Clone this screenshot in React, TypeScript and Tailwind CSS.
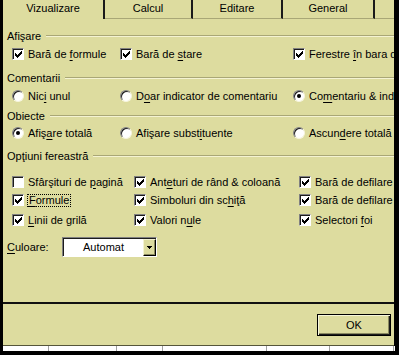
import React from "react";

// one letter of a label may carry the access-key underline
function Acc({ text, at, focus = false }: { text: string; at?: number; focus?: boolean }) {
  const body =
    at === undefined ? (
      text
    ) : (
      <>
        {text.slice(0, at)}
        <span className="underline underline-offset-[2px]">{text.charAt(at)}</span>
        {text.slice(at + 1)}
      </>
    );
  return (
    <span className={focus ? "outline outline-1 outline-dotted outline-black px-[1px]" : ""}>
      {body}
    </span>
  );
}

function CheckBox({ checked }: { checked: boolean }) {
  return (
    <span className="flex h-[12px] w-[12px] shrink-0 items-center justify-center border border-t-[#808080] border-l-[#808080] border-b-white border-r-white bg-white shadow-[inset_1px_1px_0_#1c1c1c]">
      {checked && (
        <svg width="7" height="7" viewBox="0 0 7 7" shapeRendering="crispEdges" className="ml-[1px] mt-[1px]">
          <rect x="0" y="2" width="1" height="3" fill="#000" />
          <rect x="1" y="3" width="1" height="3" fill="#000" />
          <rect x="2" y="4" width="1" height="3" fill="#000" />
          <rect x="3" y="3" width="1" height="3" fill="#000" />
          <rect x="4" y="2" width="1" height="3" fill="#000" />
          <rect x="5" y="1" width="1" height="3" fill="#000" />
          <rect x="6" y="0" width="1" height="3" fill="#000" />
        </svg>
      )}
    </span>
  );
}

function Radio({ on }: { on: boolean }) {
  return (
    <span className="flex h-[12px] w-[12px] shrink-0 items-center justify-center rounded-full border border-t-[#808080] border-l-[#808080] border-b-[#f6f5dc] border-r-[#f6f5dc] bg-white shadow-[inset_1px_1px_0_#1c1c1c]">
      {on && <span className="h-[4px] w-[4px] rounded-full bg-black" />}
    </span>
  );
}

function Group({ title, className }: { title: string; className: string }) {
  return (
    <div className={`flex h-4 shrink-0 items-center pl-[4px] ${className}`}>
      <span className="whitespace-nowrap">{title}</span>
      <div className="ml-[5px] h-[2px] flex-1 border-t border-b border-t-[#a9a776] border-b-[#f4f3d2]" />
    </div>
  );
}

interface Opt {
  text: string;
  at?: number;
  on: boolean;
  focus?: boolean;
}

function Row({
  items,
  kind,
  cols,
  className,
}: {
  items: Opt[];
  kind: "check" | "radio";
  cols: string;
  className: string;
}) {
  return (
    <div className={`grid h-4 shrink-0 items-center pl-[9px] ${cols} ${className}`}>
      {items.map((it) => (
        <div key={it.text} className="flex items-center gap-[4px] whitespace-nowrap">
          {kind === "check" ? <CheckBox checked={it.on} /> : <Radio on={it.on} />}
          <Acc text={it.text} at={it.at} focus={it.focus} />
        </div>
      ))}
    </div>
  );
}

const tabs = [
  { label: "Vizualizare", w: "w-[102px]", selected: true },
  { label: "Calcul", w: "w-[88px]", selected: false },
  { label: "Editare", w: "w-[90px]", selected: false },
  { label: "General", w: "w-[92px]", selected: false },
];

export default function App() {
  const top = "grid-cols-[108px_173px_1fr]";
  const win = "grid-cols-[122px_165px_1fr]";

  return (
    <div className="flex h-[355px] w-[399px] flex-col overflow-hidden bg-black font-['Liberation_Sans',Arial,sans-serif] text-[11px] leading-none text-black">
      <div className="flex h-[346px] shrink-0">
        <div className="w-[3px] shrink-0" />
        <div className="flex w-[391px] shrink-0 flex-col overflow-hidden bg-[#dddc9f]">
          {/* Tab strip */}
          <div className="flex h-[19px] shrink-0">
            {tabs.map((t) => (
              <div
                key={t.label}
                className={`flex ${t.w} shrink-0 items-center justify-center border-r-2 border-r-[#1a1a1a] pb-[2px] ${
                  t.selected ? "" : "border-b border-b-[#a9a776]"
                }`}
              >
                {t.label}
              </div>
            ))}
            <div className="flex-1 border-b border-b-[#a9a776]" />
          </div>

          {/* Tab page */}
          <div className="flex h-[283px] shrink-0 flex-col">
            <Group title="Afişare" className="mt-[9px]" />
            <Row
              kind="check"
              cols={top}
              className="mt-[2px]"
              items={[
                { text: "Bară de formule", at: 8, on: true },
                { text: "Bară de stare", at: 8, on: true },
                { text: "Ferestre în bara de activităţi", at: 9, on: true },
              ]}
            />

            <Group title="Comentarii" className="mt-[8px]" />
            <Row
              kind="radio"
              cols={top}
              className="mt-[2px]"
              items={[
                { text: "Nici unul", at: 3, on: false },
                { text: "Doar indicator de comentariu", at: 1, on: false },
                { text: "Comentariu & indicator", at: 2, on: true },
              ]}
            />

            <Group title="Obiecte" className="mt-[4px]" />
            <Row
              kind="radio"
              cols={top}
              className="mt-[1px]"
              items={[
                { text: "Afişare totală", at: 4, on: true },
                { text: "Afişare substituente", at: 13, on: false },
                { text: "Ascundere totală", at: 5, on: false },
              ]}
            />

            <Group title="Opţiuni fereastră" className="mt-[7px]" />
            <Row
              kind="check"
              cols={win}
              className="mt-[10px]"
              items={[
                { text: "Sfârşituri de pagină", at: 14, on: false },
                { text: "Anteturi de rând & coloană", at: 3, on: true },
                { text: "Bară de defilare pe orizontală", on: true },
              ]}
            />
            <Row
              kind="check"
              cols={win}
              className="mt-[2px]"
              items={[
                { text: "Formule", at: 0, on: true, focus: true },
                { text: "Simboluri din schiţă", at: 16, on: true },
                { text: "Bară de defilare pe verticală", on: true },
              ]}
            />
            <Row
              kind="check"
              cols={win}
              className="mt-[4px]"
              items={[
                { text: "Linii de grilă", at: 0, on: true },
                { text: "Valori nule", at: 8, on: true },
                { text: "Selectori foi", at: 10, on: true },
              ]}
            />

            <div className="mt-[9px] flex h-[20px] shrink-0 items-center pl-[4px]">
              <span className="w-[55px] shrink-0">
                <Acc text="Culoare:" at={0} />
              </span>
              <div className="flex h-[20px] w-[95px] border border-t-[#808080] border-l-[#808080] border-b-white border-r-white shadow-[inset_1px_1px_0_#1c1c1c]">
                <div className="ml-[1px] mt-[1px] flex flex-1 items-center justify-center bg-white">
                  Automat
                </div>
                <div className="mt-[1px] flex w-[13px] items-center justify-center border border-t-[#f4f3d2] border-l-[#f4f3d2] border-b-black border-r-black bg-[#dddc9f] shadow-[inset_-1px_-1px_0_#8a8960]">
                  <svg width="5" height="3" viewBox="0 0 5 3" shapeRendering="crispEdges">
                    <path d="M0 0h5L2.5 3z" fill="#000" />
                  </svg>
                </div>
              </div>
            </div>
          </div>

          <div className="h-[2px] shrink-0 bg-[#111]" />

          {/* Buttons */}
          <div className="flex h-[41px] shrink-0 items-start justify-end pr-[3px] pt-[10px]">
            <button className="flex h-[22px] w-[74px] items-center justify-center border border-black bg-[#dddc9f] shadow-[inset_1px_1px_0_#f6f5dc,inset_-1px_-1px_0_#1c1c1c,inset_-2px_-2px_0_#8a8960]">
              OK
            </button>
          </div>
          <div className="h-[1px] shrink-0 bg-[#55553a]" />
        </div>
        <div className="flex-1" />
      </div>

      {/* Sheet grid peeking out below the dialog */}
      <div className="ml-[3px] flex h-[5px] w-[392px] shrink-0 bg-white">
        <div className="w-[46px] border-r border-r-[#a0a0a0]" />
        <div className="w-[68px] border-r border-r-[#a0a0a0]" />
        <div className="w-[46px] border-r border-r-[#a0a0a0]" />
        <div className="w-[104px] border-r border-r-[#a0a0a0]" />
        <div className="w-[63px] border-r border-r-[#a0a0a0]" />
        <div className="w-[64px] border-r border-r-[#a0a0a0]" />
      </div>
    </div>
  );
}
